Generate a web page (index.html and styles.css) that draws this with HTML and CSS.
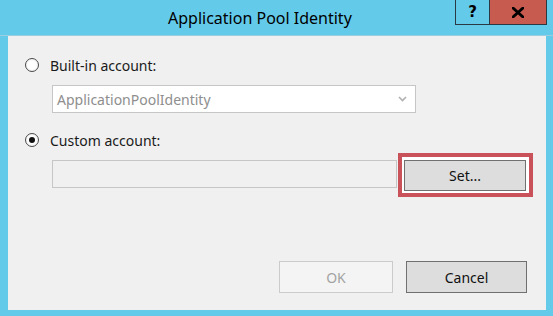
FILE: index.html
```html
<!DOCTYPE html>
<html>
<head>
<meta charset="utf-8">
<link rel="stylesheet" href="styles.css">
</head>
<body>
<div class="window">
  <div class="titlebar">
    <div class="title">Application Pool Identity</div>
    <div class="caption-buttons">
      <div class="cap-btn help">?</div>
      <div class="cap-btn close">
        <svg width="12" height="11" viewBox="0 0 12 11"><path d="M1 1 L11 10 M11 1 L1 10" stroke="#000" stroke-width="2.8" stroke-linecap="square"/></svg>
      </div>
    </div>
  </div>
  <div class="content">
    <div class="radio-row">
      <span class="radio"></span>
      <span class="label">Built-in account:</span>
    </div>
    <div class="combo">
      <span class="combo-text">ApplicationPoolIdentity</span>
      <svg class="chev" width="9" height="6" viewBox="0 0 9 6"><path d="M1 1 L4.5 4.5 L8 1" fill="none" stroke="#b0b0b0" stroke-width="1.6"/></svg>
    </div>
    <div class="radio-row second">
      <span class="radio checked"></span>
      <span class="label">Custom account:</span>
    </div>
    <div class="account-row">
      <div class="textbox"></div>
      <div class="highlight">
        <div class="btn set">Set...</div>
      </div>
    </div>
    <div class="footer">
      <div class="btn ok">OK</div>
      <div class="btn cancel">Cancel</div>
    </div>
  </div>
</div>
</body>
</html>
```

FILE: styles.css
```css
html, body {
  margin: 0;
  padding: 0;
}
body {
  width: 553px;
  height: 316px;
  background: #64caea;
  font-family: "Noto Sans", "Open Sans", sans-serif;
  overflow: hidden;
}
.window {
  width: 553px;
  height: 316px;
  display: flex;
  flex-direction: column;
}
.titlebar {
  height: 35px;
  display: flex;
  align-items: flex-start;
  border-bottom: 1px solid #9ccde0;
}
.title {
  padding-left: 168px;
  padding-top: 7px;
  font-size: 16px;
  line-height: 22px;
  color: #000;
}
.caption-buttons {
  margin-left: auto;
  margin-right: 6px;
  display: flex;
  height: 25px;
  border: 1px solid #2b3a42;
  border-top: none;
  box-sizing: border-box;
}
.cap-btn {
  height: 24px;
  display: flex;
  align-items: center;
  justify-content: center;
}
.help {
  width: 33px;
  font-family: "DejaVu Sans", sans-serif;
  font-weight: bold;
  font-size: 15px;
  color: #000;
  border-right: 1px solid #2b3a42;
}
.close {
  width: 56px;
  background: #c75b50;
}
.content {
  margin: 0 7px 6px 8px;
  flex: 1;
  background: #f0f0f0;
  padding: 21px 0 0 18px;
  box-sizing: border-box;
}
.radio-row {
  display: flex;
  align-items: center;
  height: 16px;
}
.radio-row.second {
  margin-top: 19px;
}
.radio {
  width: 14px;
  height: 14px;
  margin-left: -1px;
  box-sizing: border-box;
  border-radius: 50%;
  border: 1px solid #4a4a4a;
  background: radial-gradient(circle, #ffffff 45%, #e4e4e4 100%);
  display: flex;
  align-items: center;
  justify-content: center;
}
.radio.checked::after {
  content: "";
  width: 6px;
  height: 6px;
  border-radius: 50%;
  background: #111;
}
.label {
  margin-left: 11px;
  font-size: 14px;
  color: #1a1a1a;
}
.combo {
  margin: 12px 0 0 26px;
  width: 364px;
  height: 28px;
  box-sizing: border-box;
  border: 1px solid #c6c6c6;
  background: #fff;
  display: flex;
  align-items: center;
  padding: 0 8px 0 4px;
}
.combo-text {
  font-size: 14px;
  color: #8e8e8e;
}
.chev {
  margin-left: auto;
}
.account-row {
  display: flex;
  align-items: flex-start;
  margin-top: 5px;
}
.textbox {
  margin: 7px 0 0 26px;
  width: 345px;
  height: 28px;
  box-sizing: border-box;
  border: 1px solid #c6c6c6;
  background: #f0f0f0;
}
.highlight {
  margin-left: 1px;
  border: 4px solid #c9525a;
  padding: 3px 3px 2px 2px;
  background: #fff;
  width: 135px;
  height: 44px;
  box-sizing: border-box;
  display: flex;
  align-items: stretch;
}
.btn {
  box-sizing: border-box;
  display: flex;
  align-items: center;
  justify-content: center;
  font-size: 14px;
  color: #111;
  border: 1px solid #707070;
  background: #dddddd;
}
.set {
  width: 100%;
  height: 31px;
}
.footer {
  display: flex;
  justify-content: flex-end;
  gap: 13px;
  margin-top: 64px;
  padding-right: 19px;
}
.ok {
  width: 114px;
  height: 32px;
  background: #f4f4f4;
  border-color: #cbcbcb;
  color: #a3a3a3;
}
.cancel {
  width: 121px;
  height: 32px;
}
```
